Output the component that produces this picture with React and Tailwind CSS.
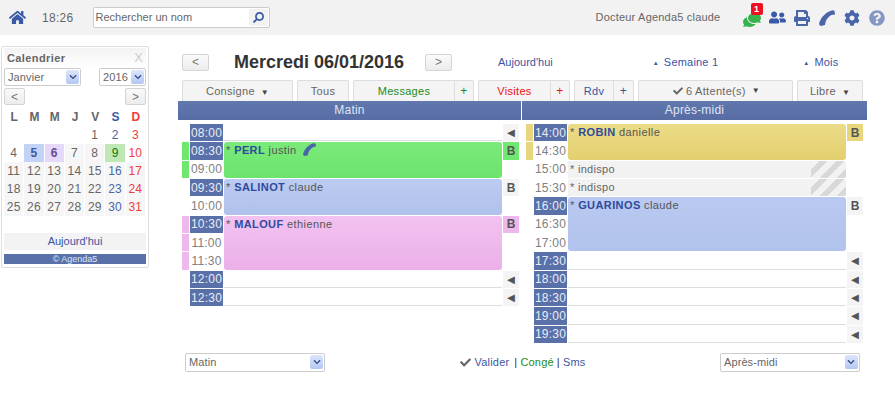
import React from "react";
import { FaHome, FaSearch, FaComments, FaUserFriends, FaPrint, FaCog, FaQuestionCircle, FaCheck, FaChevronDown } from "react-icons/fa";

const Phone = ({ size = 16, className = "" }) => (
  <svg width={size} height={size} viewBox="0 0 16 16" className={className} fill="currentColor">
    <path d="M15.5 1 L16 4.4 C15 4.7 13.8 4.5 13 4.8 C10.2 5.8 7.4 9.2 6.6 12 C6.3 13 6.4 14 5.9 15 L2 16 C0.4 15.4 -0.2 14.2 0.3 12.8 C2.1 7 7 2 12.8 0.4 C13.8 0.1 14.8 0.3 15.5 1 Z" />
  </svg>
);

const Sel = ({ label, className = "" }) => (
  <div className={`flex items-center justify-between h-[18px] pl-[3px] pr-[1px] bg-white border border-[#ccc] rounded-[2px] text-[11px] tracking-[0.1px] text-[#666] ${className}`}>
    <span>{label}</span>
    <span className="w-[13px] h-[14px] flex items-center justify-center rounded-[2px] bg-linear-to-b from-[#dde6fb] to-[#b4c7f2] text-[#2f4a86]">
      <FaChevronDown size={8} />
    </span>
  </div>
);

const SmallBtn = ({ children, className = "" }) => (
  <button className={`flex items-center justify-center border border-[#d4d4d4] rounded-[2px] bg-linear-to-b from-[#fafafa] to-[#ececec] text-[#777] text-[12px] ${className}`}>{children}</button>
);

const days = [
  ["", "", "", "", "1", "2", "3"],
  ["4", "5", "6", "7", "8", "9", "10"],
  ["11", "12", "13", "14", "15", "16", "17"],
  ["18", "19", "20", "21", "22", "23", "24"],
  ["25", "26", "27", "28", "29", "30", "31"],
];

const cellClass = (d, c) => {
  if (!d) return "";
  if (d === "5") return "bg-[#c3d3f7] text-[#3c5a9c] font-bold";
  if (d === "6") return "bg-[#e6d8f8] text-[#6a4a90] font-bold";
  if (d === "9") return "bg-[#bfe8b4] text-[#0a7a0a]";
  const bg = Number(d) >= 7 && d !== "10" ? "bg-[#f6f6f6] " : "";
  if (c === 5) return bg + "text-[#4a66a8]";
  if (c === 6) return bg + "text-[#f43c3c]";
  return bg + "text-[#666]";
};

const Sidebar = () => (
  <aside className="ml-[1px] w-[148px] h-[222px] border border-[#ddd] rounded-[2px] px-[2px] pt-[1px] shrink-0 flex flex-col">
    <div className="flex justify-between items-center h-[20px] pl-[3px] pr-[3px] bg-linear-to-b from-[#f3f3f3] to-white">
      <span className="font-bold text-[11px] text-[#666] tracking-[0.4px]">Calendrier</span>
      <span className="text-[#ccc] text-[13px]">X</span>
    </div>
    <div className="flex justify-between">
      <Sel label="Janvier" className="w-[77px]" />
      <Sel label="2016" className="w-[47px]" />
    </div>
    <div className="flex justify-between mt-[2px]">
      <SmallBtn className="w-[21px] h-[17px]">&lt;</SmallBtn>
      <SmallBtn className="w-[21px] h-[17px]">&gt;</SmallBtn>
    </div>
    <div className="grid grid-cols-7 mt-[3px] h-[17px] items-center text-center text-[12px] font-bold">
      {["L", "M", "M", "J", "V", "S", "D"].map((d, i) => (
        <span key={i} className={i === 5 ? "text-[#3a5aa8]" : i === 6 ? "text-[#f43c3c]" : "text-[#666]"}>{d}</span>
      ))}
    </div>
    <div className="grid grid-cols-7 auto-rows-[18px] mt-[1px] text-center text-[12px] leading-[18px] tracking-[0.2px]">
      {days.flatMap((row, r) =>
        row.map((d, c) => (
          <span key={`${r}-${c}`} className={`mr-[1px] ${cellClass(d, c)}`}>{d}</span>
        ))
      )}
    </div>
    <div className="mt-[17px] h-[17px] bg-[#f3f3f3] text-center text-[11px] leading-[17px] text-[#3a55a5]">Aujourd'hui</div>
    <div className="mt-[4px] h-[10px] bg-[#5a70a8] text-center text-[9px] leading-[10px] text-[#dfe5f5]">© Agenda5</div>
  </aside>
);

const Tab = ({ label, plus, color = "text-[#666]", w, plusW = "w-[19px]", plusColor = "", caret }) => (
  <div className={`flex h-[21px] border border-b-0 border-[#ddd] rounded-t-[2px] bg-[#f4f4f4] text-[11px] leading-[20px] tracking-[0.3px] ${w}`}>
    <span className={`flex-1 text-center ${color}`}>{label}{caret && <span className="text-[8px] ml-[6px] text-[#444]">▼</span>}</span>
    {plus && <span className={`${plusW} text-center border-l border-[#ddd] text-[12px] ${plusColor}`}>+</span>}
  </div>
);

const SlotRow = ({ row }) => {
  const { t, on, strip, kind, ev, side } = row;
  return (
    <>
      <div className={`mb-px ${strip || ""}`} />
      <div className={`mb-px flex items-center justify-center text-[12px] tracking-[0.2px] ${on ? "bg-[#5a70a8] text-[#e8ecf8]" : "text-[#808080]"}`}>{t}</div>
      {kind === "empty" && <div className="mb-px border-b border-[#ddd]" />}
      {kind === "indispo" && (
        <div className="mb-px flex bg-[#f2f2f2] text-[11px] text-[#666] tracking-[0.3px]">
          <span className="flex-1 pl-[2px] leading-[16px]">* indispo</span>
          <span className="w-[35px] bg-[repeating-linear-gradient(135deg,#f2f2f2_0,#f2f2f2_6px,#d8d8d8_6px,#d8d8d8_12px)]" />
        </div>
      )}
      {kind === "event" && (
        <div className={`mb-px rounded-[3px] pl-[2px] text-[11px] leading-[16px] tracking-[0.4px] text-[#555] flex items-start ${ev.bg} ${ev.span}`}>
          <span>*&nbsp;<b className="text-[#2f4b9e]">{ev.name}</b> {ev.first}</span>
          {ev.phone && <Phone size={13} className="ml-[6px] mt-[1px] text-[#4a66a8]" />}
        </div>
      )}
      {side ? (
        <div className={`mb-px flex items-center justify-center text-[#555] ${side === "◄" ? "bg-[#f4f4f4] text-[13px]" : `text-[12px] font-bold ${row.sideBg || "bg-[#f4f4f4]"}`}`}>{side}</div>
      ) : (
        <div />
      )}
    </>
  );
};

const green = { bg: "bg-linear-to-b from-[#7aea7a] to-[#6ce46c]", span: "row-span-2", name: "PERL", first: "justin", phone: true };
const blue1 = { bg: "bg-linear-to-b from-[#bccbf1] to-[#b0c1ec]", span: "row-span-2", name: "SALINOT", first: "claude" };
const pink = { bg: "bg-linear-to-b from-[#f2c2f0] to-[#ebb0e8]", span: "row-span-3", name: "MALOUF", first: "ethienne" };
const yellow = { bg: "bg-linear-to-b from-[#ebdc88] to-[#e3cf6e]", span: "row-span-2", name: "ROBIN", first: "danielle" };
const blue2 = { bg: "bg-linear-to-b from-[#b9c9f1] to-[#b1c2ec]", span: "row-span-3", name: "GUARINOS", first: "claude" };

const left = [
  { t: "08:00", on: true, kind: "empty", side: "◄" },
  { t: "08:30", on: true, strip: "bg-[#70e870]", kind: "event", ev: green, side: "B", sideBg: "bg-[#70e870]" },
  { t: "09:00", strip: "bg-[#70e870]" },
  { t: "09:30", on: true, kind: "event", ev: blue1, side: "B" },
  { t: "10:00" },
  { t: "10:30", on: true, strip: "bg-[#efb8ec]", kind: "event", ev: pink, side: "B", sideBg: "bg-[#efb8ec]" },
  { t: "11:00", strip: "bg-[#efb8ec]" },
  { t: "11:30", strip: "bg-[#efb8ec]" },
  { t: "12:00", on: true, kind: "empty", side: "◄" },
  { t: "12:30", on: true, kind: "empty", side: "◄" },
];

const right = [
  { t: "14:00", on: true, strip: "bg-[#e8d67c]", kind: "event", ev: yellow, side: "B", sideBg: "bg-[#e8d67c]" },
  { t: "14:30", strip: "bg-[#e8d67c]" },
  { t: "15:00", kind: "indispo" },
  { t: "15:30", kind: "indispo" },
  { t: "16:00", on: true, kind: "event", ev: blue2, side: "B" },
  { t: "16:30" },
  { t: "17:00" },
  { t: "17:30", on: true, kind: "empty", side: "◄" },
  { t: "18:00", on: true, kind: "empty", side: "◄" },
  { t: "18:30", on: true, kind: "empty", side: "◄" },
  { t: "19:00", on: true, kind: "empty", side: "◄" },
  { t: "19:30", on: true, kind: "empty", side: "◄" },
];

const Planning = ({ rows }) => (
  <div className="grid grid-cols-[7px_33px_278px_16px] gap-x-px auto-rows-[18.33px] pl-[4px] pt-[4px]">
    {rows.map((r) => {
      const { t } = r;
      if (r.kind) return <SlotRow key={t} row={r} />;
      return (
        <React.Fragment key={t}>
          <div className={`mb-px col-start-1 ${r.strip || ""}`} />
          <div className="mb-px col-start-2 flex items-center justify-center text-[12px] tracking-[0.2px] text-[#808080]">{t}</div>
          <div className="col-start-4" />
        </React.Fragment>
      );
    })}
  </div>
);

export default function App() {
  return (
    <div className="w-[895px] h-[404px] bg-white overflow-hidden font-['Liberation_Sans',Arial,sans-serif] text-[12px] text-[#666]">
      <header className="h-[35px] bg-[#f2f2f2] flex items-center whitespace-nowrap">
        <FaHome size={17} className="ml-[9px] text-[#3a5aa8]" />
        <span className="ml-[16px] tracking-[0.3px]">18:26</span>
        <div className="ml-[19px] w-[177px] h-[21px] flex items-center justify-between bg-white border border-[#ccc] rounded-[2px] pl-[2px] pr-[1px]">
          <span className="text-[11px]">Rechercher un nom</span>
          <span className="w-[19px] h-[17px] bg-[#f2f2f2] flex items-center justify-center text-[#3a5aa8]"><FaSearch size={11} className="-scale-x-100" /></span>
        </div>
        <span className="ml-[326px] w-[124px] shrink-0 text-[11px] tracking-[0.2px]">Docteur Agenda5 claude</span>
        <div className="relative ml-[23px] w-[18px] h-[16px] mt-[2px] text-[#37b24d]">
          <FaComments size={18} className="-scale-x-100" />
          <span className="absolute -top-[8px] left-[8px] w-[12px] h-[12px] rounded-[2px] bg-[#ee1122] text-white text-[9px] font-bold leading-[12px] text-center">1</span>
        </div>
        <span className="ml-[8px] w-[17px] flex justify-center text-[#3a5aa8]"><FaUserFriends size={17} /></span>
        <FaPrint size={16} className="ml-[8px] text-[#4a66a8]" />
        <Phone size={16} className="ml-[9px] text-[#4a66a8]" />
        <FaCog size={16} className="ml-[9px] text-[#4a66a8]" />
        <FaQuestionCircle size={16} className="ml-[9px] text-[#8496c4]" />
      </header>

      <div className="flex pt-[11px]">
        <Sidebar />
        <main className="ml-[29px] w-[689px]">
          <div className="flex items-center h-[34px] pl-[4px] pb-[2px] whitespace-nowrap">
            <SmallBtn className="w-[27px] h-[17px]">&lt;</SmallBtn>
            <h1 className="ml-[25px] w-[191px] text-[18px] font-bold text-[#333]">Mercredi 06/01/2016</h1>
            <SmallBtn className="w-[27px] h-[17px]">&gt;</SmallBtn>
            <span className="ml-[46px] text-[11px] text-[#3a55a5]">Aujourd'hui</span>
            <span className="ml-[100px] text-[#3a55a5] text-[11px] tracking-[0.2px]"><span className="text-[6px] align-[1px] mr-[5px]">▲</span>Semaine 1</span>
            <span className="ml-[85px] text-[#3a55a5] text-[11px] tracking-[0.2px]"><span className="text-[6px] align-[1px] mr-[5px]">▲</span>Mois</span>
          </div>
          <div className="flex gap-[4px] pl-[4px]">
            <Tab label="Consigne" caret w="w-[111px]" />
            <Tab label="Tous" w="w-[52px]" />
            <Tab label="Messages" color="text-[#1a8c1a]" plus plusColor="text-[#1a8c1a]" w="w-[121px]" />
            <Tab label="Visites" color="text-[#ee1111]" plus plusColor="text-[#ee1111]" w="w-[92px]" />
            <Tab label="Rdv" color="text-[#3a55a5]" plus plusColor="text-[#3a55a5]" w="w-[60px]" plusW="w-[20px]" />
            <div className="w-[155px] h-[21px] pl-[2px] flex items-center justify-center gap-[3px] border border-b-0 border-[#ddd] rounded-t-[2px] bg-[#f4f4f4] text-[11px] tracking-[0.3px]">
              <FaCheck size={10} className="text-[#666]" /><span>6 Attente(s)</span><span className="text-[8px] ml-[3px] text-[#444]">▼</span>
            </div>
            <Tab label="Libre" caret w="w-[66px]" />
          </div>
          <div className="grid grid-cols-[343px_345px] gap-x-px">
            <div className="h-[19px] bg-linear-to-b from-[#6178ae] to-[#566ca3] text-center text-[12px] leading-[19px] text-[#dfe5f5] tracking-[0.2px]">Matin</div>
            <div className="h-[19px] bg-linear-to-b from-[#6178ae] to-[#566ca3] text-center text-[12px] leading-[19px] text-[#dfe5f5] tracking-[0.2px]">Après-midi</div>
            <Planning rows={left} />
            <Planning rows={right} />
          </div>
          <div className="mt-[9px] ml-[7px] w-[675px] flex items-center justify-between">
            <Sel label="Matin" className="w-[140px] h-[19px]" />
            <div className="flex items-center text-[11px] tracking-[0.2px]">
              <FaCheck size={11} className="text-[#666] mr-[4px]" />
              <span className="text-[#3a55a5]">Valider</span>
              <span className="ml-[5px] text-[#333]">|</span>
              <span className="ml-[3px] text-[#1a8c1a]">Congé</span>
              <span className="ml-[3px] text-[#333]">|</span>
              <span className="ml-[3px] text-[#3a55a5]">Sms</span>
            </div>
            <Sel label="Après-midi" className="w-[140px] h-[19px]" />
          </div>
        </main>
      </div>
    </div>
  );
}
